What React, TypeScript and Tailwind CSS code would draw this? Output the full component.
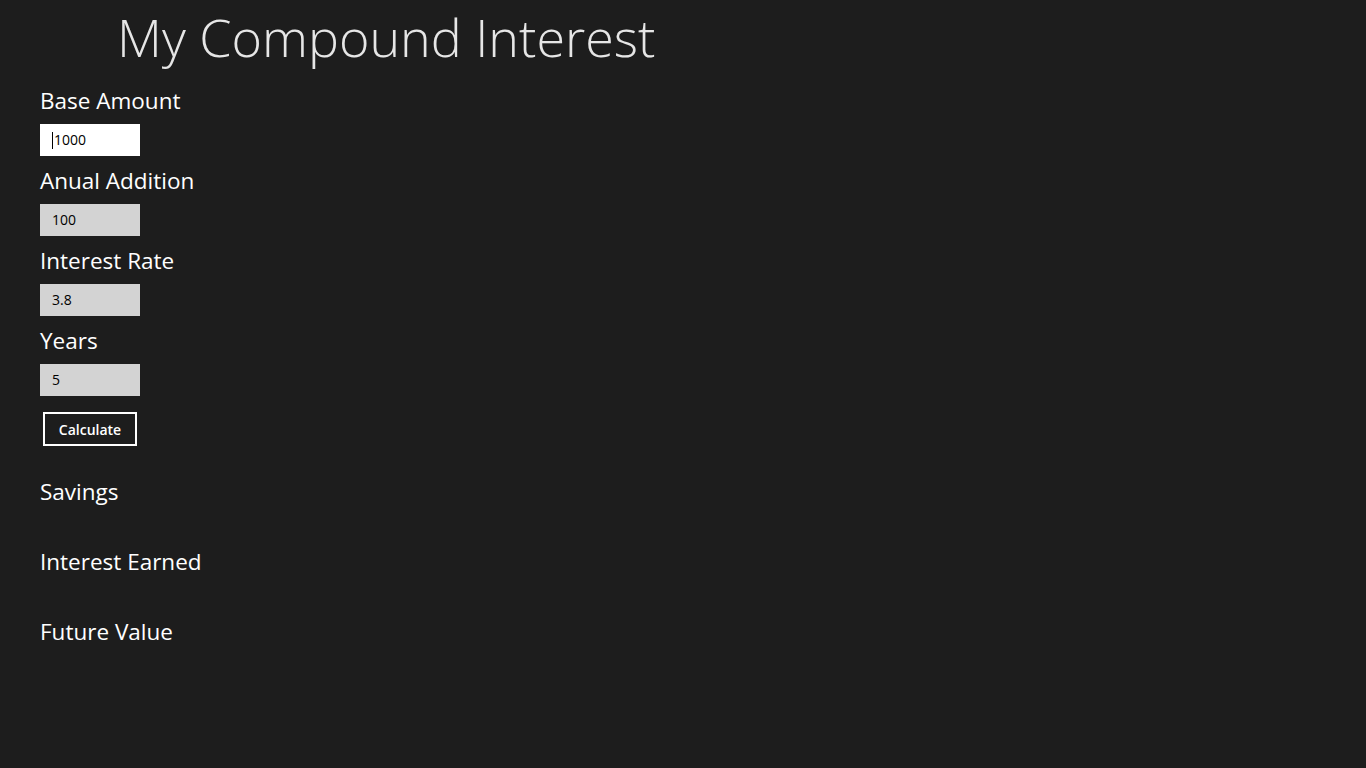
import React, { useState } from 'react';

function Field({ label, value, active }: { label: string; value: string; active?: boolean }) {
  return (
    <div className="flex flex-col">
      <label className="h-[36px] text-[22.5px] leading-[28px] pt-[3px] text-white">{label}</label>
      <div
        className={
          'mt-[4px] flex h-[32px] w-[100px] items-center pl-[12px] text-[14px] text-black ' +
          (active ? 'bg-white' : 'bg-[#d3d3d3]')
        }
      >
        {active && <span className="mr-[1px] h-[17px] w-[1px] bg-black" />}
        <span className="-mt-[1px]">{value}</span>
      </div>
    </div>
  );
}

export default function App() {
  const [fields] = useState([
    { label: 'Base Amount', value: '1000' },
    { label: 'Anual Addition', value: '100' },
    { label: 'Interest Rate', value: '3.8' },
    { label: 'Years', value: '5' },
  ]);

  return (
    <div
      className="min-h-screen w-full bg-[#1d1d1d] text-white"
      style={{ fontFamily: '"Open Sans", "Noto Sans", sans-serif' }}
    >
      <h1 className="pl-[117px] pt-[2px] h-[84px] text-[52px] font-light leading-[70px] text-[#e6e6e6]">
        My Compound Interest
      </h1>

      <div className="flex flex-col gap-[8px] pl-[40px]">
        {fields.map((f, i) => (
          <Field key={f.label} label={f.label} value={f.value} active={i === 0} />
        ))}
      </div>

      <div className="pl-[43px] pt-[16px]">
        <button className="h-[34px] w-[94px] border-2 border-white text-[14px] font-semibold text-white">
          Calculate
        </button>
      </div>

      <div className="flex flex-col pl-[40px] pt-[28px]">
        {['Savings', 'Interest Earned', 'Future Value'].map((t) => (
          <div key={t} className="h-[70px] text-[22.5px] leading-[36px] text-white">
            {t}
          </div>
        ))}
      </div>
    </div>
  );
}
